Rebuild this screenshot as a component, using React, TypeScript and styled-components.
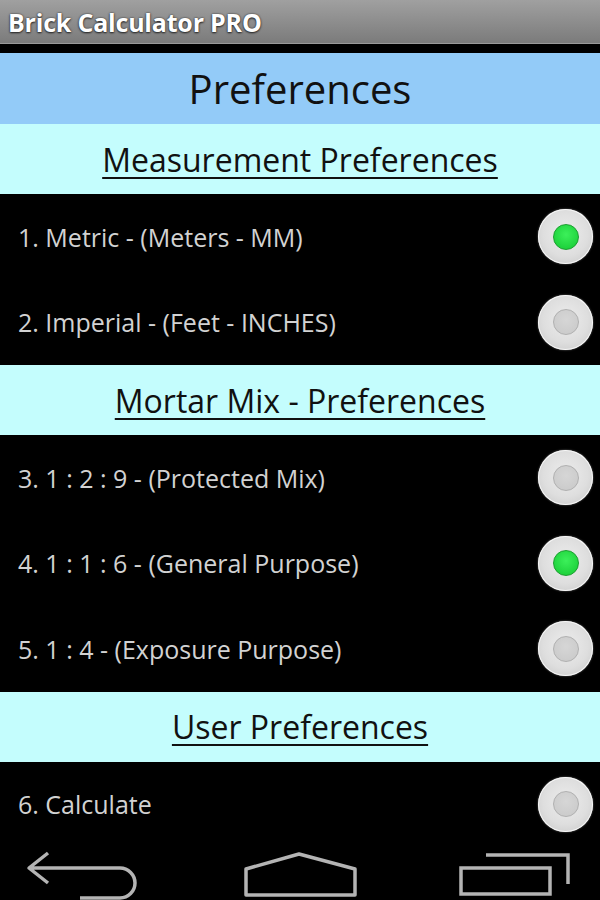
import styled, { createGlobalStyle } from 'styled-components';

const GlobalStyle = createGlobalStyle`
  html, body {
    margin: 0;
    padding: 0;
    background: #000;
  }
  body {
    width: 600px;
    height: 900px;
    overflow: hidden;
    font-family: 'Open Sans', 'Noto Sans', sans-serif;
  }
`;

type Option = { label: string; checked: boolean };
type Section = { title: string; options: Option[] };

const sections: Section[] = [
  {
    title: 'Measurement Preferences',
    options: [
      { label: '1. Metric - (Meters - MM)', checked: true },
      { label: '2. Imperial - (Feet - INCHES)', checked: false },
    ],
  },
  {
    title: 'Mortar Mix - Preferences',
    options: [
      { label: '3. 1 : 2 : 9 - (Protected Mix)', checked: false },
      { label: '4. 1 : 1 : 6 - (General Purpose)', checked: true },
      { label: '5. 1 : 4 - (Exposure Purpose)', checked: false },
    ],
  },
  {
    title: 'User Preferences',
    options: [{ label: '6. Calculate', checked: false }],
  },
];

export default function App() {
  return (
    <Screen>
      <GlobalStyle />
      <TitleBar>Brick Calculator PRO</TitleBar>
      <Content>
        <PageHeader>Preferences</PageHeader>
        {sections.map((section) => (
          <div key={section.title}>
            <SectionHeader>
              <span>{section.title}</span>
            </SectionHeader>
            {section.options.map((opt) => (
              <OptionRow key={opt.label}>
                <OptionLabel>{opt.label}</OptionLabel>
                <Radio>
                  <RadioDot checked={opt.checked} />
                </Radio>
              </OptionRow>
            ))}
          </div>
        ))}
      </Content>
      <NavBar>
        <NavButton>
          <svg width="120" height="53" viewBox="0 0 120 53">
            <path
              d="M24 6 L5 21 L24 36 M5 21 L96 21 A15 15 0 0 1 96 51 L56 51"
              fill="none"
              stroke="#b4b4b4"
              strokeWidth="3.5"
              strokeLinejoin="round"
            />
          </svg>
        </NavButton>
        <NavButton>
          <svg width="120" height="53" viewBox="0 0 120 53">
            <path
              d="M58 7 L5 22 L5 48 L114 48 L114 22 Z"
              fill="none"
              stroke="#b4b4b4"
              strokeWidth="3.5"
              strokeLinejoin="round"
            />
          </svg>
        </NavButton>
        <NavButton>
          <svg width="120" height="53" viewBox="0 0 120 53">
            <path d="M29 8 L111 8 L111 37" fill="none" stroke="#b4b4b4" strokeWidth="3.5" />
            <rect x="4" y="21" width="89" height="26" fill="none" stroke="#b4b4b4" strokeWidth="3.5" />
          </svg>
        </NavButton>
      </NavBar>
    </Screen>
  );
}

const Screen = styled.div`
  width: 600px;
  height: 900px;
  display: flex;
  flex-direction: column;
  background: #000;
  overflow: hidden;
`;

const TitleBar = styled.div`
  height: 44px;
  flex-shrink: 0;
  box-sizing: border-box;
  padding: 0 8px;
  display: flex;
  align-items: center;
  background: linear-gradient(#a0a0a0, #7b7b7b);
  border-bottom: 1px solid #9a9a9a;
  margin-bottom: 9px;
  color: #fff;
  font-weight: 700;
  font-size: 25px;
  letter-spacing: -0.2px;
  text-shadow: 0 0 2px #333, 0 1px 2px #222;
`;

const Content = styled.div`
  flex: 1;
  display: flex;
  flex-direction: column;
`;

const PageHeader = styled.div`
  height: 71px;
  display: flex;
  align-items: center;
  justify-content: center;
  background: #93cbf8;
  color: #111;
  font-size: 40px;
`;

const SectionHeader = styled.div`
  height: 70px;
  display: flex;
  align-items: center;
  justify-content: center;
  background: #c4fdfd;
  color: #111;
  font-size: 32px;

  span {
    text-decoration: underline;
    text-decoration-thickness: 2px;
    text-underline-offset: 5px;
  }
`;

const OptionRow = styled.div`
  height: 85.5px;
  display: flex;
  align-items: center;
  justify-content: space-between;
  padding: 0 7px 0 18px;
`;

const OptionLabel = styled.span`
  color: #d2d2d2;
  font-size: 25px;
`;

const Radio = styled.div`
  width: 55px;
  height: 55px;
  border-radius: 50%;
  display: flex;
  align-items: center;
  justify-content: center;
  background: radial-gradient(circle at 50% 45%, #ededed 0%, #dedede 55%, #c4c4c4 100%);
  box-shadow: inset 0 0 0 1px #f6f6f6, 0 0 2px #777;
`;

const RadioDot = styled.div<{ checked: boolean }>`
  width: 26px;
  height: 26px;
  border-radius: 50%;
  box-sizing: border-box;
  background: ${(p) =>
    p.checked
      ? 'radial-gradient(circle at 50% 40%, #3cf05a, #14c832)'
      : 'radial-gradient(circle at 50% 40%, #d6d6d6, #c8c8c8)'};
  border: 1.5px solid ${(p) => (p.checked ? '#1a9e2e' : '#b0b0b0')};
`;

const NavBar = styled.div`
  height: 53px;
  flex-shrink: 0;
  display: flex;
  justify-content: space-between;
  padding: 0 23px 0 24px;
`;

const NavButton = styled.div`
  width: 120px;
  height: 53px;
  display: flex;
  align-items: flex-start;
`;
